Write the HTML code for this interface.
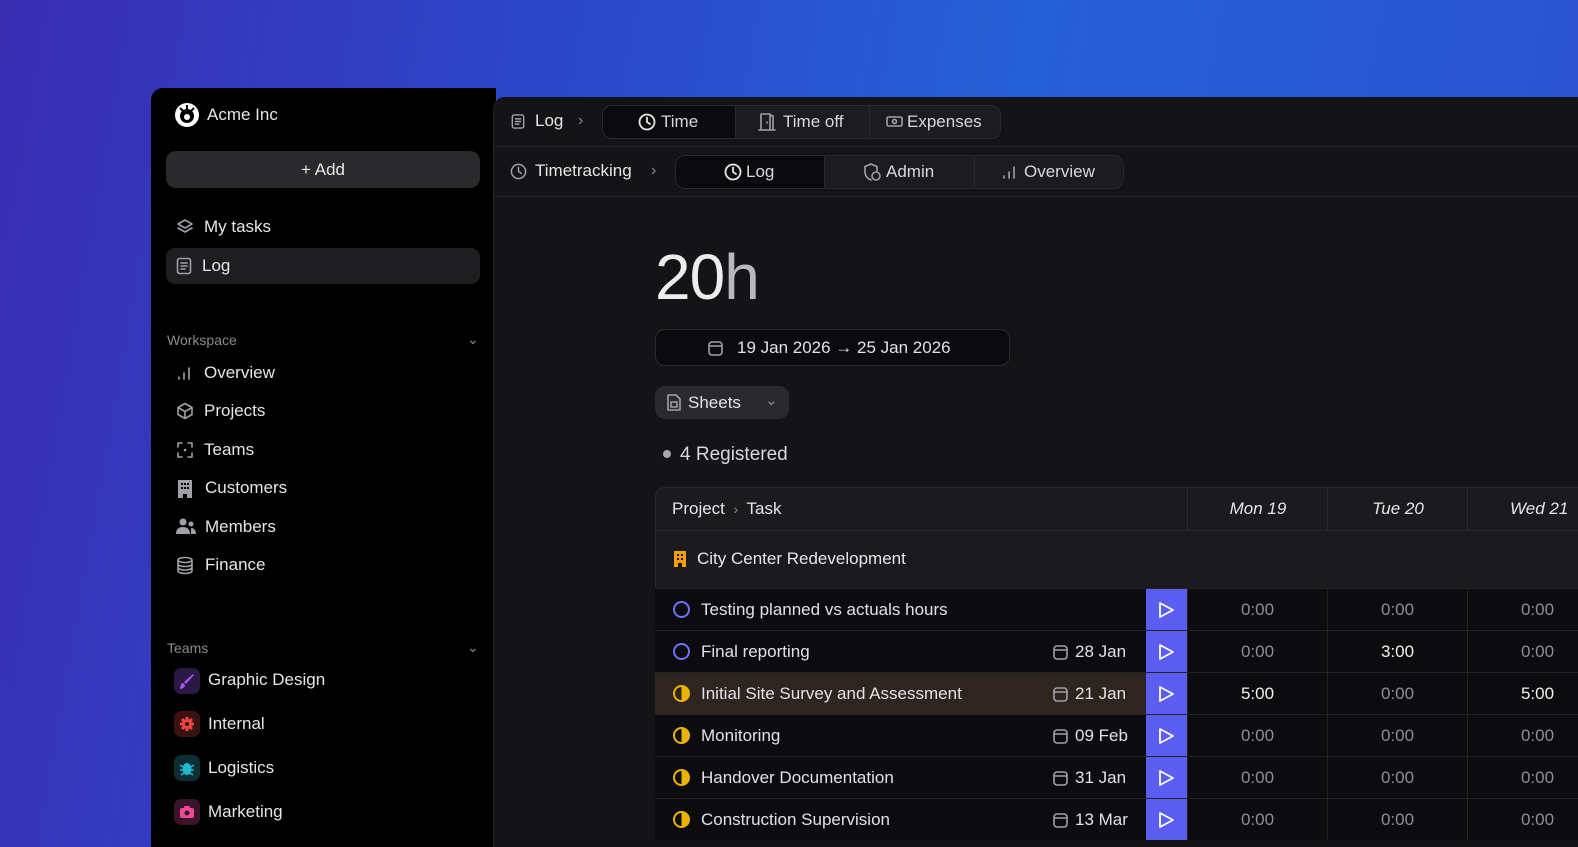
<!DOCTYPE html>
<html><head><meta charset="utf-8"><style>
*{box-sizing:border-box;margin:0;padding:0}
html,body{width:1578px;height:847px;overflow:hidden}
body{position:relative;font-family:"Liberation Sans",sans-serif;background:linear-gradient(100deg,#3a2db3 0%,#2d45c8 30%,#2560d6 60%,#2b4fd0 100%);}
.a{position:absolute;white-space:nowrap}
#side{position:absolute;left:151px;top:88px;width:345px;height:760px;background:#000;border-radius:12px 0 0 0}
#main{position:absolute;left:493px;top:97px;width:1100px;height:760px;background:#141416;border-radius:12px 0 0 0;border-left:1px solid #222}
.t{color:#e6e6e8;font-size:17px}
.g{color:#8a8a90;font-size:14px}
svg{position:absolute}
.ic{stroke:#a0a0a6;fill:none;stroke-width:1.6;stroke-linecap:round;stroke-linejoin:round}
.iw{stroke:#e6e6e8;fill:none;stroke-width:1.8;stroke-linecap:round;stroke-linejoin:round}
.hl{position:absolute;left:166px;width:314px;height:36px;background:#1e1e20;border-radius:9px}
.seg{position:absolute;height:34px;border:1px solid #2a2a2d;border-radius:10px;background:#1c1c1f;overflow:hidden}
.seg div{position:absolute;top:0;height:100%;border-right:1px solid #2a2a2d;color:#d8d8dc;font-size:17px;line-height:32px}
.row{position:absolute;left:655px;width:940px;height:42px;border-top:1px solid #232326;background:#0c0c0e}
.cell{position:absolute;top:0;height:41px;width:140px;border-left:1px solid #222;color:#8e8e94;font-size:17px;text-align:center;line-height:41px}
.play{position:absolute;left:491px;top:0;width:41px;height:41px;background:#5b5ef0}
.tsk{position:absolute;left:46px;top:0;line-height:41px;color:#e2e2e6;font-size:17px}
.dt{position:absolute;left:420px;top:0;line-height:41px;color:#e2e2e6;font-size:17px}
.ti{position:absolute;left:18px;top:12px;width:17px;height:17px;border-radius:50%}
.badge{position:absolute;left:174px;width:26px;height:26px;border-radius:7px}
</style></head><body>
<div id="side"></div>
<div id="main"></div>

<svg style="left:174px;top:102px" width="26" height="26" viewBox="0 0 26 26"><circle cx="13" cy="13" r="12" fill="#fff"/><circle cx="13" cy="14" r="7" fill="#000"/><circle cx="13" cy="15" r="3" fill="#fff"/><path d="M6 6l3 3M20 6l-3 3M13 3v4" stroke="#000" stroke-width="2"/></svg>
<div class="a t" style="left:207px;top:105px">Acme Inc</div>
<div class="a" style="left:166px;top:151px;width:314px;height:37px;background:#2a2a2c;border-radius:10px;color:#e6e6e8;font-size:17px;text-align:center;line-height:37px">+ Add</div>
<svg style="left:176px;top:218px" width="18" height="18" viewBox="0 0 18 18"><path class="ic" d="M9 2l7 4-7 4-7-4z M2 10l7 4 7-4"/></svg>
<div class="a t" style="left:204px;top:217px">My tasks</div>
<div class="hl" style="top:248px"></div>
<svg style="left:176px;top:257px" width="16" height="18" viewBox="0 0 16 18"><rect class="ic" x="1.5" y="1.5" width="13" height="15" rx="2"/><path class="ic" d="M5 6h6M5 9h6M5 12h4"/></svg>
<div class="a t" style="left:202px;top:256px">Log</div>

<div class="a g" style="left:167px;top:332px">Workspace</div>
<div class="a g" style="left:467px;top:331px">⌄</div>
<svg style="left:177px;top:365px" width="16" height="16" viewBox="0 0 16 16"><path class="ic" d="M2 14v-2M7 14V8M12 14V3"/></svg>
<div class="a t" style="left:204px;top:363px">Overview</div>
<svg style="left:176px;top:402px" width="18" height="18" viewBox="0 0 18 18"><path class="ic" d="M9 1.5l7 4v7l-7 4-7-4v-7z M2 5.5l7 4 7-4 M9 9.5v7"/></svg>
<div class="a t" style="left:204px;top:401px">Projects</div>
<svg style="left:177px;top:442px" width="16" height="16" viewBox="0 0 16 16"><path class="ic" d="M1 5V1h4M11 1h4v4M15 11v4h-4M5 15H1v-4"/><circle cx="8" cy="8" r="1.3" fill="#a0a0a6"/></svg>
<div class="a t" style="left:204px;top:440px">Teams</div>
<svg style="left:177px;top:479px" width="16" height="19" viewBox="0 0 16 19"><path d="M1 1h14v18h-5v-4H6v4H1z" fill="#a0a0a6"/><path d="M4 4h2v2H4zM7 4h2v2H7zM10 4h2v2h-2zM4 8h2v2H4zM7 8h2v2H7zM10 8h2v2h-2z" fill="#000"/></svg>
<div class="a t" style="left:205px;top:478px">Customers</div>
<svg style="left:176px;top:518px" width="20" height="17" viewBox="0 0 20 17"><circle cx="7" cy="4" r="3.5" fill="#a0a0a6"/><path d="M0 16c0-5 3-7 7-7s7 2 7 7z" fill="#a0a0a6"/><circle cx="15" cy="6" r="2.5" fill="#a0a0a6"/><path d="M15 10c3 0 5 2 5 6h-5z" fill="#a0a0a6"/></svg>
<div class="a t" style="left:205px;top:517px">Members</div>
<svg style="left:176px;top:556px" width="18" height="19" viewBox="0 0 18 19"><ellipse class="ic" cx="9" cy="4" rx="7" ry="2.5"/><path class="ic" d="M2 4v11c0 1.4 3 2.5 7 2.5s7-1.1 7-2.5V4M2 8c0 1.4 3 2.5 7 2.5S16 9.4 16 8M2 11.5c0 1.4 3 2.5 7 2.5s7-1.1 7-2.5"/></svg>
<div class="a t" style="left:205px;top:555px">Finance</div>

<div class="a g" style="left:167px;top:640px">Teams</div>
<div class="a g" style="left:467px;top:639px">⌄</div>
<div class="badge" style="top:668px;background:#2a1845"></div>
<svg style="left:178px;top:672px" width="18" height="18" viewBox="0 0 18 18"><path d="M15 2l1 1-8 9-2-2z" fill="#a855f7"/><path d="M5 11l2 2c0 2-2 4-5 4 0-3 1-6 3-6z" fill="#a855f7"/></svg>
<div class="a t" style="left:208px;top:670px">Graphic Design</div>
<div class="badge" style="top:711px;background:#3a1212"></div>
<svg style="left:179px;top:716px" width="16" height="16" viewBox="0 0 16 16"><circle cx="8" cy="8" r="5" fill="#ef4444"/><path d="M8 1v14M1 8h14M3 3l10 10M13 3L3 13" stroke="#ef4444" stroke-width="3"/><circle cx="8" cy="8" r="2" fill="#3a1212"/></svg>
<div class="a t" style="left:208px;top:714px">Internal</div>
<div class="badge" style="top:755px;background:#0d2e33"></div>
<svg style="left:179px;top:760px" width="16" height="16" viewBox="0 0 16 16"><ellipse cx="8" cy="9" rx="4.5" ry="6" fill="#22b8cf"/><path d="M1 5l3 2M15 5l-3 2M1 10h3M15 10h-3M2 15l3-2M14 15l-3-2" stroke="#22b8cf" stroke-width="1.5"/></svg>
<div class="a t" style="left:208px;top:758px">Logistics</div>
<div class="badge" style="top:799px;background:#3a1428"></div>
<svg style="left:179px;top:804px" width="16" height="16" viewBox="0 0 16 16"><rect x="1" y="4" width="14" height="10" rx="2" fill="#ec4899"/><rect x="5" y="2" width="6" height="3" rx="1" fill="#ec4899"/><circle cx="8" cy="9" r="2.5" fill="#3a1428"/></svg>
<div class="a t" style="left:208px;top:802px">Marketing</div>

<div class="a" style="left:494px;top:146px;width:1100px;height:1px;background:#252528"></div>
<div class="a" style="left:494px;top:196px;width:1100px;height:1px;background:#252528"></div>
<svg style="left:511px;top:113px" width="14" height="17" viewBox="0 0 16 18"><rect class="ic" x="1.5" y="1.5" width="13" height="15" rx="2"/><path class="ic" d="M5 6h6M5 9h6M5 12h4"/></svg>
<div class="a t" style="left:535px;top:111px">Log</div>
<div class="a g" style="left:578px;top:112px;font-size:16px">›</div>
<div class="seg" style="left:602px;top:105px;width:399px">
<div style="left:0;width:133px;background:#0b0b0d;padding-left:58px">Time</div>
<div style="left:133px;width:134px;padding-left:47px">Time off</div>
<div style="left:267px;width:132px;border:none;padding-left:37px">Expenses</div></div>
<svg style="left:638px;top:113px" width="18" height="18" viewBox="0 0 18 18"><circle class="iw" cx="9" cy="9" r="7.5"/><path class="iw" d="M9 4.5V9l3 2"/></svg>
<svg style="left:758px;top:112px" width="18" height="19" viewBox="0 0 18 19"><path class="ic" d="M1 18h16M3 18V2h9v16M12 3l3 1v14M9 10v1"/></svg>
<svg style="left:886px;top:115px" width="17" height="13" viewBox="0 0 17 13"><rect class="ic" x="1" y="2" width="15" height="9" rx="1.5"/><circle class="ic" cx="8.5" cy="6.5" r="2"/></svg>
<svg style="left:510px;top:163px" width="17" height="17" viewBox="0 0 18 18"><circle class="ic" cx="9" cy="9" r="7.5"/><path class="ic" d="M9 4.5V9l3 2"/></svg>
<div class="a t" style="left:535px;top:161px">Timetracking</div>
<div class="a g" style="left:651px;top:162px;font-size:16px">›</div>
<div class="seg" style="left:675px;top:155px;width:449px">
<div style="left:0;width:149px;background:#0b0b0d;padding-left:70px">Log</div>
<div style="left:149px;width:150px;padding-left:61px">Admin</div>
<div style="left:299px;width:150px;border:none;padding-left:49px">Overview</div></div>
<svg style="left:724px;top:163px" width="18" height="18" viewBox="0 0 18 18"><circle class="iw" cx="9" cy="9" r="7.5"/><path class="iw" d="M9 4.5V9l3 2"/></svg>
<svg style="left:863px;top:163px" width="19" height="19" viewBox="0 0 19 19"><path class="ic" d="M8 1l6 2.5V8M8 1L2 3.5V9c0 4 3 7 6 8"/><circle class="ic" cx="13" cy="13" r="4"/></svg>
<svg style="left:1002px;top:164px" width="16" height="16" viewBox="0 0 16 16"><path class="ic" d="M2 14v-2M7 14V8M12 14V3"/></svg>

<div class="a" style="left:655px;top:240px;font-size:64px;color:#ececee;letter-spacing:-1px">20<span style="color:#b8b8be">h</span></div>
<div class="a" style="left:655px;top:329px;width:355px;height:37px;border:1px solid #2a2a2d;border-radius:10px;background:#0b0b0d;color:#e2e2e6;font-size:17px;line-height:35px;padding-left:81px">19 Jan 2026 → 25 Jan 2026</div>
<svg style="left:708px;top:340px" width="15" height="16" viewBox="0 0 15 16"><rect class="ic" x="1" y="2" width="13" height="13" rx="3"/><path class="ic" d="M1 6h13"/></svg>
<div class="a" style="left:655px;top:386px;width:134px;height:33px;border-radius:10px;background:#2a2a2d;color:#e2e2e6;font-size:17px;line-height:33px;padding-left:33px">Sheets</div>
<svg style="left:666px;top:393px" width="16" height="19" viewBox="0 0 16 19"><path class="ic" d="M2 2h8l4 4v11H2z"/><rect class="ic" x="5" y="9" width="6" height="5"/></svg>
<div class="a g" style="left:765px;top:391px;font-size:15px">⌄</div>
<div class="a" style="left:663px;top:450px;width:8px;height:8px;border-radius:50%;background:#a8a8b0"></div>
<div class="a" style="left:680px;top:444px;color:#d8d8dc;font-size:19px">4 Registered</div>

<div class="a" style="left:655px;top:487px;width:940px;height:102px;background:#1b1b1e;border:1px solid #29292c;border-radius:10px 0 0 0"></div>
<div class="a" style="left:655px;top:530px;width:940px;height:1px;background:#29292c"></div>
<div class="a t" style="left:672px;top:499px">Project <span style="color:#888;font-size:14px">&nbsp;›&nbsp;</span> Task</div>
<div class="a" style="left:1187px;top:488px;width:1px;height:42px;background:#2c2c2f"></div>
<div class="a" style="left:1327px;top:488px;width:1px;height:42px;background:#2c2c2f"></div>
<div class="a" style="left:1467px;top:488px;width:1px;height:42px;background:#2c2c2f"></div>
<div class="a t" style="left:1188px;top:499px;width:140px;text-align:center;font-style:italic">Mon 19</div>
<div class="a t" style="left:1328px;top:499px;width:140px;text-align:center;font-style:italic">Tue 20</div>
<div class="a t" style="left:1510px;top:499px;font-style:italic">Wed 21</div>
<svg style="left:674px;top:551px" width="12" height="16" viewBox="0 0 12 16"><path d="M0 0h12v16H8v-4H4v4H0z" fill="#f59e0b"/><path d="M3 3h2v2H3zM7 3h2v2H7zM3 7h2v2H3zM7 7h2v2H7z" fill="#1b1b1e"/></svg>
<div class="a t" style="left:697px;top:549px">City Center Redevelopment</div>

<div id="rows"></div>
<script>
var d=[["Testing planned vs actuals hours","",0,["0:00","0:00","0:00"]],["Final reporting","28 Jan",0,["0:00","3:00","0:00"]],["Initial Site Survey and Assessment","21 Jan",1,["5:00","0:00","5:00"]],["Monitoring","09 Feb",1,["0:00","0:00","0:00"]],["Handover Documentation","31 Jan",1,["0:00","0:00","0:00"]],["Construction Supervision","13 Mar",1,["0:00","0:00","0:00"]]];
var h="";d.forEach(function(r,i){var y=588+i*42;
var ic=r[2]?'<div class="ti" style="border:2px solid #eab308;background:linear-gradient(90deg,transparent 50%,#eab308 50%)"></div>':'<div class="ti" style="border:2px solid #6d73f5"></div>';
h+='<div class="row" style="top:'+y+'px">'+(i==2?'<div style="position:absolute;left:0;top:0;width:491px;height:41px;background:#2e2420"></div>':'')+ic+'<div class="tsk">'+r[0]+'</div>'+(r[1]?'<svg style="left:398px;top:13px" width="15" height="16" viewBox="0 0 15 16"><rect class="ic" x="1" y="2" width="13" height="13" rx="3"/><path class="ic" d="M1 6h13"/></svg><div class="dt">'+r[1]+'</div>':'')+'<div class="play"><svg style="left:12px;top:12px" width="17" height="18" viewBox="0 0 17 18"><path d="M2 2l13 7-13 7z" fill="none" stroke="#fff" stroke-width="1.8" stroke-linejoin="round"/></svg></div>';
r[3].forEach(function(v,j){h+='<div class="cell" style="left:'+(532+j*140)+'px;'+(v!="0:00"?'color:#f0f0f2':'')+'">'+v+'</div>';});
h+='</div>';});
document.getElementById("rows").innerHTML=h;
</script>
</body></html>
